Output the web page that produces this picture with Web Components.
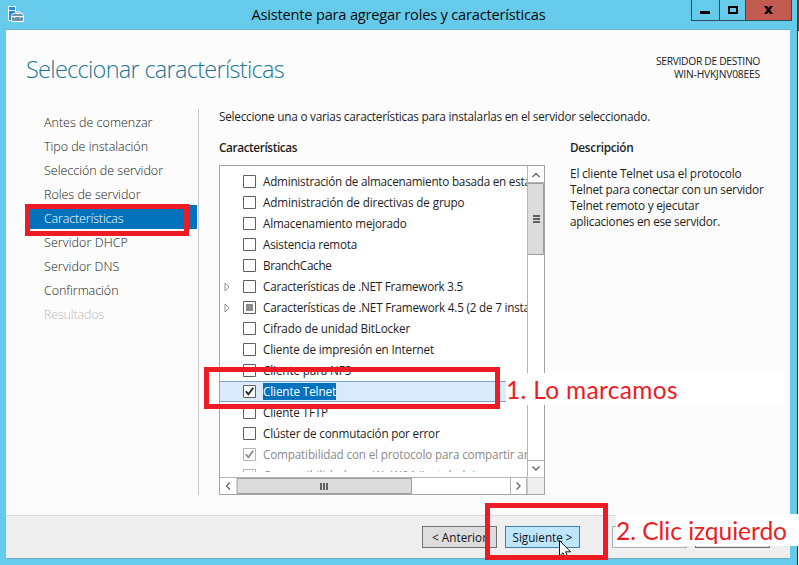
<!DOCTYPE html>
<html lang="es"><head><meta charset="utf-8"><title>Asistente para agregar roles y características</title>
<style>
html,body{margin:0;width:799px;height:565px;overflow:hidden;background:#fff;font-family:"Open Sans","Noto Sans",sans-serif}
</style></head><body>
<wizard-window></wizard-window>
<script>
// <fit-text w="…">: spreads or tightens its letters so the text takes a given width.
// "measure" names the leading part of the text the width applies to.
customElements.define('fit-text', class extends HTMLElement {
  constructor(){super();this.attachShadow({mode:'open'}).innerHTML=
    '<style>:host{display:inline-block;white-space:pre}span{display:inline-block}</style><span></span>';}
  connectedCallback(){
    const s=this.shadowRoot.querySelector('span'),full=this.getAttribute('text'),m=this.getAttribute('measure')||full;
    s.textContent=m;
    const d=(+this.getAttribute('w')-s.getBoundingClientRect().width)/m.length;
    s.style.letterSpacing=d.toFixed(4)+'px';
    s.textContent=full;
  }
});
customElements.define('title-bar', class extends HTMLElement {
  constructor(){super();this.attachShadow({mode:'open'}).innerHTML=`<style>
  :host{display:flex;height:29px;justify-content:space-between;align-items:flex-start;box-sizing:border-box;padding-left:8px;padding-right:5px}
  .ic{padding-top:6px;width:16px;height:16px}
  .t{font-size:14.6px;line-height:20px;padding-top:4px;color:#0a0a0a;margin-left:82px}
  .b{display:flex;height:21px;box-sizing:border-box;border:1px solid #2d4d5c;border-top:0}
  .b div{display:block;box-sizing:border-box;height:20px;border-right:1px solid #2d4d5c}
  .b div:last-child{border:0;background:#c35a51} svg{display:block}
  </style>
  <svg class="ic" viewBox="0 0 16 16"><path d="M.5.5h7v14h-7z" fill="#1e8ae0" stroke="#fff"/><path d="M1 4.500h6" stroke="#fff"/><path d="M3.500 15.500v-6l1.500-2h2l1-1.500h4l1 1.500h1.500l1 2v6z" fill="#7194a8" stroke="#fff"/><path d="M4 10.500h11M6.500 10v2M12.500 10v2M8 7.500h4" stroke="#fff" fill="none"/></svg>
  <fit-text class="t" w="294" text="Asistente para agregar roles y características"></fit-text>
  <div class="b"><div style="width:28px"><svg width="27" height="20"><path d="M8 11h10v3H8z"/></svg></div>
  <div style="width:26px"><svg width="25" height="20"><path d="M8 6h10v8H8zM10 8v4h6V8z" fill-rule="evenodd"/></svg></div>
  <div style="width:45px"><svg width="45" height="20"><path d="M18 6h3l1.500 2L24 6h3l-3 4 3 4h-3l-1.500-2L21 14h-3l3-4z"/></svg></div></div>`;}
});
customElements.define('step-list', class extends HTMLElement {
  constructor(){super();
    const items=[['Antes de comenzar',108.500],['Tipo de instalación',104],['Selección de servidor',119],['Roles de servidor',96.500],['Características',79.500],['Servidor DHCP',84],['Servidor DNS',75.500],['Confirmación',74.500],['Resultados',60]];
    this.attachShadow({mode:'open'}).innerHTML=`<style>
    :host{display:block;box-sizing:border-box;width:193px;height:386px;margin-top:1px;border-right:1px solid #c9c9c9;font-size:12.500px;font-weight:300;color:#1a1a1a}
    div{height:24px;line-height:24px;padding-top:2px;box-sizing:border-box;padding-left:18px;margin:0 1px 0 20px}
    .on{background:#0072bc;color:#fff}.off{color:#bbb}</style>`+
    items.map(([t,w],i)=>`<div class="${i==4?'on':i==8?'off':''}"><fit-text w="${w}" text="${t}"></fit-text></div>`).join('');}
});
customElements.define('feature-row', class extends HTMLElement {
  constructor(){super();this.attachShadow({mode:'open'});}
  connectedCallback(){
    const a=n=>this.getAttribute(n),st=a('state')||'';
    const mark=st=='part'?'<path d="M3 3h7v7H3z" fill="#8a8a8a"/>':st?'<path d="M2.800 6.200 5.300 9.300 10.300 2.800" fill="none" stroke="currentColor" stroke-width="1.800"/>':'';
    this.shadowRoot.innerHTML=`<style>
    :host{display:flex;height:21px;box-sizing:border-box;align-items:center;font-size:11.700px;line-height:21px;color:#1e1e1e;padding-left:4px;border:0 solid #7da2ce}
    :host([state=sel]){background:#dbeafd;border-width:1px 0;line-height:19px}
    :host([state=off]){color:#8b8b8b}
    svg{flex:none}.e{width:8px;height:10px;margin-right:11px}.c{width:13px;height:13px;margin-right:7px}
    .sel{background:#0072c0;color:#fff;height:17px;line-height:17px}</style>
    <svg class="e" viewBox="0 0 8 10">${a('tree')!==null?'<path d="M1 1v8l4-4z" fill="#fff" stroke="#929292"/>':''}</svg>
    <svg class="c" viewBox="0 0 13 13"><path d="M.5.5h12v12H.5z" fill="#fff" stroke="${st=='off'?'#b5b5b5':'#606060'}"/>${mark}</svg>
    <fit-text class="${st}" w="${a('w')}" text="${a('text')}" ${a('measure')?`measure="${a('measure')}"`:''}></fit-text>`;
  }
});
customElements.define('feature-list', class extends HTMLElement {
  constructor(){super();
    const rows=[['Administración de almacenamiento basada en estándares',261.500,'','Administración de almacenamiento basada en est'],
    ['Administración de directivas de grupo',201.500],['Almacenamiento mejorado',143.500],['Asistencia remota',94],['BranchCache',68.500],
    ['Características de .NET Framework 3.5',200,'','',1],
    ['Características de .NET Framework 4.5 (2 de 7 instalado)',260.500,'part','Características de .NET Framework 4.5 (2 de 7 inst',1],
    ['Cifrado de unidad BitLocker',147],['Cliente de impresión en Internet',171],['Cliente para NFS',88],['Cliente Telnet',73,'sel'],['Cliente TFTP',65],
    ['Clúster de conmutación por error',176.500],
    ['Compatibilidad con el protocolo para compartir archivos SMB 1.0',251.500,'off','Compatibilidad con el protocolo para compartir'],
    ['Compatibilidad con WoW64 (Instalado)',213,'off']];
    this.attachShadow({mode:'open'}).innerHTML=`<style>
    :host{display:grid;box-sizing:border-box;width:326px;height:330px;border:1px solid #a5a5a5;grid-template-columns:307px 17px;grid-template-rows:311px 17px;background:#fff}
    .l{overflow:hidden;height:306px;padding-top:5px;box-sizing:border-box}
    .v{display:flex;flex-direction:column;border-left:1px solid #b4b4b4;box-sizing:border-box}
    .h{display:flex;border-top:1px solid #b4b4b4;box-sizing:border-box}
    .k{background:#efefef;border-top:1px solid #ccc;border-left:1px solid #ccc}
    svg{display:block;flex:none}</style>
    <div class="l">${rows.map(([t,w,s,m,tr])=>`<feature-row text="${t}" w="${w}" state="${s||''}" ${m?`measure="${m}"`:''} ${tr?'tree':''}></feature-row>`).join('')}</div>
    <div class="v"><svg width="16" height="311"><path d="M4.500 11 8 7.500l3.500 3.500M4.500 300.500 8 304l3.500-3.500" fill="none" stroke="#666" stroke-width="1.400"/><path d="M0 16.500h16M0 294.500h16" stroke="#b4b4b4"/><path d="M0 17.500h15.500v71H0" fill="#dcdcdc" stroke="#9d9d9d"/><path d="M5 50h7M5 53h7M5 56h7" stroke="#606060" stroke-width="2"/></svg></div>
    <div class="h"><svg width="307" height="16"><path d="M10 4.500 6.500 8l3.500 3.500M296.500 4.500 300 8l-3.500 3.500" fill="none" stroke="#666" stroke-width="1.400"/><path d="M17 .5h174.500v15H17z" fill="#dcdcdc" stroke="#9d9d9d"/><path d="M101 5v7M104 5v7M107 5v7" stroke="#606060" stroke-width="2"/><path d="M290.500 0v16M306.500 0v16" stroke="#b4b4b4"/></svg></div>
    <div class="k"></div>`;}
});
customElements.define('push-button', class extends HTMLElement {
  constructor(){super();this.attachShadow({mode:'open'}).innerHTML=`<style>
  :host{display:flex;box-sizing:border-box;width:75px;height:22px;border:1px solid #707070;background:#ddd;font-size:11.700px;line-height:20px;color:#111;justify-content:center}
  :host([hot]){background:#bee6fd;border-color:#3c7fb1}:host([dim]){border-color:#adb2b5;background:#f4f4f4}</style><slot></slot>`;}
});
customElements.define('red-frame', class extends HTMLElement {
  constructor(){super();this.attachShadow({mode:'open'}).innerHTML=`<style>:host{display:block;position:absolute;box-sizing:border-box;border:5px solid #ed1c24}</style>`;}
});
customElements.define('red-note', class extends HTMLElement {
  constructor(){super();this.attachShadow({mode:'open'}).innerHTML=`<style>:host{display:block;position:absolute;box-sizing:border-box;height:32px;background:#fff;color:#ed1c24;font:24.500px/34px Lato,sans-serif}</style><slot></slot>`;}
});
customElements.define('wizard-window', class extends HTMLElement {
  constructor(){super();this.attachShadow({mode:'open'}).innerHTML=`<style>
  :host{display:block;position:relative;width:799px;height:565px;overflow:hidden;background:#fff}
  .win{width:797px;height:565px;background:#66caea;border-right:1px solid #1f3f4c;box-sizing:content-box}
  .body{margin-left:6px;width:784px;height:530px;box-sizing:border-box;border-top:1px solid #72b0c5;border-bottom:1px solid #72a9be;background:#fcfcfc;display:flex;flex-direction:column}
  header{display:flex;justify-content:space-between;height:78px;padding:0 30px 0 20px}
  h1{margin:0;font-size:23.500px;font-weight:300;line-height:32px;padding-top:23px;color:#1b7594}
  .dest{display:flex;flex-direction:column;align-items:flex-end;font-size:10.300px;line-height:13px;padding-top:25px;color:#1a1a1a}
  main{display:flex;height:407px}
  .copy{font-size:11.800px;color:#1e1e1e;line-height:16px}
  .intro{padding-left:20px;height:16px}
  .cols{display:flex;padding-left:20px}.col{width:351px}
  .cap{font-weight:600;height:16px;margin:15px 0 10px}
  .desc{display:flex;flex-direction:column}
  footer{box-sizing:border-box;height:43px;flex:none;border-top:1px solid #d9d9d9;background:#efefef;padding:10px 20px 0 416px;display:flex}
  push-button + push-button{margin-left:8px}
  .cur{position:absolute;left:558px;top:539px}
  .edge{position:absolute;right:0;top:0;width:1px;height:31px;background:#444}
  </style>
  <div class="win"><title-bar></title-bar>
  <div class="body">
   <header><h1><fit-text w="258" text="Seleccionar características"></fit-text></h1>
    <div class="dest"><fit-text w="104" text="SERVIDOR DE DESTINO"></fit-text><fit-text w="86" text="WIN-HVKJNV08EES"></fit-text></div></header>
   <main><step-list></step-list>
    <div class="copy"><div class="intro"><fit-text w="431" text="Seleccione una o varias características para instalarlas en el servidor seleccionado."></fit-text></div>
     <div class="cols"><div class="col"><div class="cap"><fit-text w="78" text="Características"></fit-text></div><feature-list></feature-list></div>
      <div><div class="cap"><fit-text w="63.500" text="Descripción"></fit-text></div>
      <div class="desc"><fit-text w="171.500" text="El cliente Telnet usa el protocolo"></fit-text><fit-text w="193.500" text="Telnet para conectar con un servidor"></fit-text><fit-text w="129" text="Telnet remoto y ejecutar"></fit-text><fit-text w="150" text="aplicaciones en ese servidor."></fit-text></div></div></div></div></main>
   <footer><push-button><fit-text w="55" text="&lt; Anterior"></fit-text></push-button><push-button hot><fit-text w="60" text="Siguiente &gt;"></fit-text></push-button><push-button dim style="margin-left:32px"></push-button><push-button></push-button></footer>
  </div></div>
  <div class="edge"></div>
  <svg class="cur" width="14" height="22" viewBox="0 0 14 22"><path d="M1.500 1.500v15.500l3.500-3.300 2.600 6 2.600-1.100-2.600-5.800h5z" fill="#fff" stroke="#111"/></svg>
  <red-frame style="left:25px;top:204px;width:164px;height:32px"></red-frame>
  <red-frame style="left:204px;top:367px;width:296px;height:42px"></red-frame>
  <red-frame style="left:485px;top:503px;width:123px;height:57px"></red-frame>
  <red-note style="left:506px;top:373px;width:280px"><fit-text w="172" text="1. Lo marcamos"></fit-text></red-note>
  <red-note style="left:616px;top:514px;width:183px"><fit-text w="171" text="2. Clic izquierdo"></fit-text></red-note>`;}
});
</script></body></html>
